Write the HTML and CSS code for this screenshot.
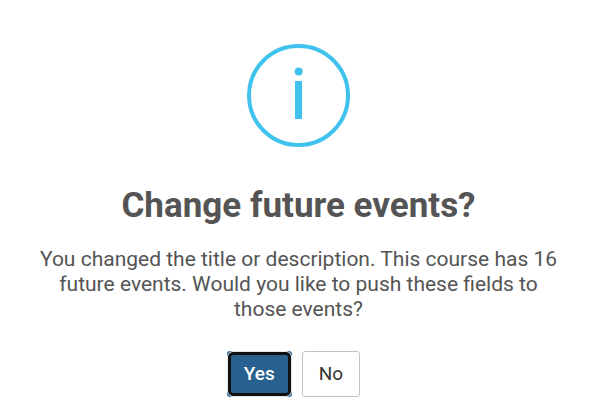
FILE: index.html
```html
<!DOCTYPE html>
<html lang="en">
<head>
<meta charset="utf-8">
<title>Change future events?</title>
<link rel="stylesheet" href="styles.css">
</head>
<body>
<main class="dialog" role="alertdialog" aria-labelledby="title" aria-describedby="message">
  <svg class="icon" viewBox="0 0 103 103" aria-hidden="true">
    <circle class="ring" cx="51.5" cy="51.5" r="49.5"/>
    <circle class="mark" cx="51.7" cy="27.5" r="4"/>
    <rect class="mark" x="48" y="37" width="7" height="38"/>
  </svg>
  <h1 class="title" id="title">Change future events?</h1>
  <p class="message" id="message">You changed the title or description. This course has 16 future events. Would you like to push these fields to those events?</p>
  <div class="actions">
    <button class="button primary" type="button">Yes</button>
    <button class="button" type="button">No</button>
  </div>
</main>
</body>
</html>
```
FILE: styles.css
```css
* {
  box-sizing: border-box;
}

body {
  margin: 0;
  background: #fff;
  font-family: Roboto, "Liberation Sans", sans-serif;
}

.dialog {
  display: flex;
  flex-direction: column;
  align-items: center;
  padding: 44px 36px 20px 32px;
  color: #545454;
  text-align: center;
}

.icon {
  width: 103px;
  height: 103px;
}

.ring {
  fill: none;
  stroke: #3fc3ee;
  stroke-width: 4;
}

.mark {
  fill: #3fc3ee;
}

.title {
  margin: 37px 0 19px;
  font-size: 35px;
  line-height: 44px;
  font-weight: 700;
}

.message {
  margin: 0 0 29px;
  font-size: 21px;
  line-height: 25px;
}

.actions {
  display: flex;
  gap: 10px;
  margin-right: 10px;
}

.button {
  height: 46px;
  padding: 0 16px;
  border: 1px solid #c4c4c4;
  border-radius: 3px;
  background: #fff;
  color: #333;
  font: 400 19px/24px Roboto, "Liberation Sans", sans-serif;
}

.primary {
  position: relative;
  padding: 0 17px;
  border: 0;
  background: #286090;
  color: #fff;
  font-weight: 500;
}

/* Focus ring drawn inside the button edge */
.primary::before {
  content: "";
  position: absolute;
  inset: 0;
  border: 1px solid #e4e8ec;
  border-radius: 6px;
  box-shadow: inset 0 0 0 3px #101010;
}
```
